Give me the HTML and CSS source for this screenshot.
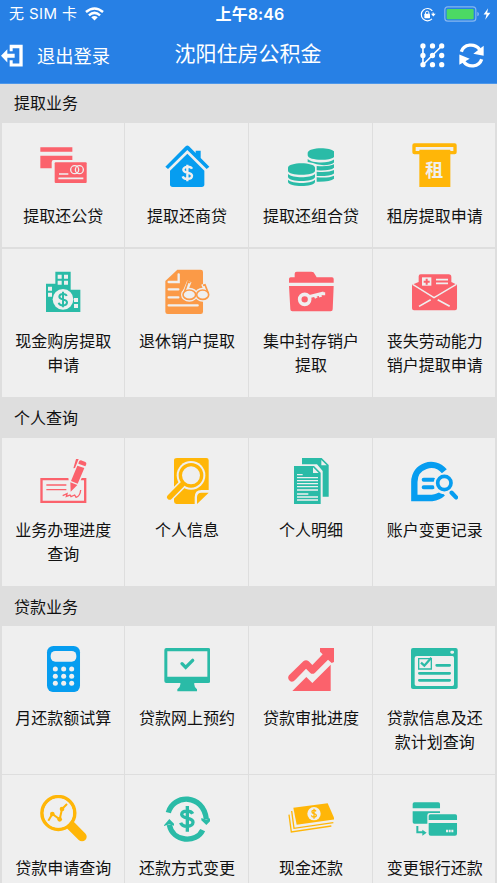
FILE: index.html
```html
<!DOCTYPE html>
<html lang="zh-CN">
<head>
<meta charset="utf-8">
<title>沈阳住房公积金</title>
<link rel="stylesheet" href="styles.css">
</head>
<body>
<header class="header">
  <div class="status">
    <div class="status-left">
      <span>无 SIM 卡</span>
      <svg class="wifi" viewBox="256 20 58 42"><g fill="none" stroke="#fff" stroke-width="7.5"><path d="M259 35Q285 13 311 35"/><path d="M268 45Q285 30 302 45"/></g><path d="M275 51Q285 43 295 51L285 61Z" fill="#fff"/></svg>
    </div>
    <div class="status-time">上午8:46</div>
    <div class="status-right">
      <svg class="lock" viewBox="519 19 48 44"><path d="M556 30A18.500 18.500 0 1 0 555 54M558 35L559 40" fill="none" stroke="#fff" stroke-width="3.500"/><path d="M552 39H566L559 47Z" fill="#fff"/><rect x="532" y="39" width="17" height="13" rx="2" fill="#fff"/><path d="M535.500 40V36A5 5 0 0 1 545.500 36V40" fill="none" stroke="#fff" stroke-width="3"/></svg>
      <svg class="battery" viewBox="589 17 108 48"><rect x="591.500" y="19.500" width="93" height="43" rx="9" fill="none" stroke="#86b6f0" stroke-width="3.500"/><rect x="597" y="26" width="81" height="31" rx="3" fill="#4cd964"/><path d="M689 34Q694 36 694 41T689 48Z" fill="#86b6f0"/></svg>
      <svg class="bolt" viewBox="707 23 23 37"><path d="M722 24L708 43H717L713 59L729 38H719Z" fill="#fff"/></svg>
    </div>
  </div>
  <nav class="nav">
    <a class="logout">
      <svg class="logout-icon" viewBox="4 134 66 68"><path d="M30 136H69V201H30V182H39V192H59V146H39V155H30Z" fill="#fff"/><path d="M4 169L23 149V163H45V175H23V189Z" fill="#fff"/></svg>
      <span>退出登录</span>
    </a>
    <h1 class="title">沈阳住房公积金</h1>
    <div class="tools">
      <svg class="pattern" viewBox="520 130 74 76"><path d="M528 139V196L585 139" fill="none" stroke="#fff" stroke-width="5"/><g fill="#fff"><circle cx="528" cy="139" r="8"/><circle cx="557" cy="139" r="8"/><circle cx="585" cy="139" r="8"/><circle cx="528" cy="168" r="8"/><circle cx="557" cy="168" r="8"/><circle cx="585" cy="168" r="8"/><circle cx="528" cy="196" r="8"/><circle cx="557" cy="196" r="8"/><circle cx="585" cy="196" r="8"/></g></svg>
      <svg class="refresh" viewBox="637 130 75 74"><g fill="none" stroke="#fff" stroke-width="10"><path d="M644 156C651 132 684 129 699 149"/><path d="M705 178C697 202 665 205 650 184"/></g><path d="M711 138V168L680 162ZM638 195V164L669 177Z" fill="#fff"/></svg>
    </div>
  </nav>
</header>

<main>
<section>
  <h2 class="heading heading-first">提取业务</h2>
  <div class="grid">
    <a class="cell">
      <svg class="icon red" viewBox="119 71 140 140"><path d="M120 84H216V97H120ZM120 109H216V122H160Q154 122 154 129V147H120Z"/><rect x="163" y="129" width="96" height="62" rx="3"/><g class="line" stroke-width="4"><circle cx="223" cy="151" r="12"/><circle cx="237" cy="151" r="12"/><path d="M176 164H204M174 177H249" stroke-width="5"/></g></svg>
      <span class="label">提取还公贷</span>
    </a>
    <a class="cell">
      <svg class="icon blue" viewBox="491 71 140 140"><path d="M495 142L556 81Q561 76 566 81L586 101V94H601V116L627 142L619 149L561 92L503 149Z"/><path d="M561 103L612 154V195Q612 203 604 203H517Q509 203 509 195V154Z"/><path class="line" d="M575 148C571 140 550 140 549 151C549 163 574 157 575 169C575 181 550 182 547 171M561 136V186" stroke-width="7"/></svg>
      <span class="label">提取还商贷</span>
    </a>
    <a class="cell">
      <svg class="icon teal" viewBox="121 71 140 140"><path d="M180 101C180 82 261 82 261 101V108C261 126 180 126 180 108ZM180 119C194 133 247 133 261 119V127C255 139 223 139 207 135Q198 130 180 128ZM207 140Q245 143 261 134V143Q253 155 207 153ZM207 157Q245 160 261 151V160Q253 171 207 170ZM207 174Q245 177 261 168V176Q253 188 207 187Z"/><path d="M121 145C121 127 202 127 202 145V154C202 170 121 170 121 154ZM121 164C135 177 188 177 202 164V173C199 189 124 189 121 173ZM121 181C135 194 188 194 202 181V188C199 204 124 204 121 188Z"/></svg>
      <span class="label">提取还组合贷</span>
    </a>
    <a class="cell">
      <svg class="icon yellow" viewBox="492 71 140 140"><path d="M502 72H623Q629 72 629 78V99Q629 105 623 105H610V203H517V105H502Q496 105 496 99V78Q496 72 502 72ZM506 83V95H517V91H610V95H619V83Z" fill-rule="evenodd"/><text class="badge" x="562" y="173">租</text></svg>
      <span class="label">租房提取申请</span>
    </a>
    <a class="cell">
      <svg class="icon teal" viewBox="119 72 140 140"><path d="M165 80H211V134H240V201H137V116H165Z"/><g class="hole"><path d="M172 89H184V101H172ZM191 89H203V101H191ZM172 107H184V119H172ZM191 107H203V119H191ZM143 125H155V137H143ZM143 143H155V155H143ZM221 159H233V171H221ZM221 177H233V189H221Z"/><circle cx="188" cy="163" r="31"/></g><path class="draw" d="M199 153C196 145 178 145 177 155C177 166 200 160 200 172C200 184 178 184 175 173M188 140V187" stroke-width="6"/></svg>
      <span class="label">现金购房提取申请</span>
    </a>
    <a class="cell">
      <svg class="icon orange" viewBox="491 72 140 140"><path d="M531 74H601Q608 74 608 81V200Q608 207 601 207H502Q495 207 495 200V108Z"/><path class="line" d="M535 88V111H505M505 133H534M505 157H534M505 181H592" stroke-width="7" stroke-linecap="round"/><path class="line" d="M552 145L567 109M622 145L609 116" stroke-width="14"/><g class="line" stroke-width="14"><ellipse cx="567" cy="149" rx="18" ry="14"/><ellipse cx="607" cy="149" rx="17" ry="14"/></g><g class="draw fillhole" stroke-width="5"><path d="M551 145L563 110L570 113M624 145L614 119L608 121"/><ellipse cx="567" cy="149" rx="19" ry="14"/><ellipse cx="607" cy="149" rx="18" ry="14"/></g></svg>
      <span class="label">退休销户提取</span>
    </a>
    <a class="cell">
      <svg class="icon red" viewBox="121 72 140 140"><path d="M124 113V102Q124 97 129 97H141V86Q141 80 147 80H191Q199 80 201 87L207 97H253Q258 97 258 102V113ZM124 123H258L255 193Q255 199 249 199H134Q128 199 128 193Z"/><circle class="line" cx="171" cy="163" r="15" stroke-width="11"/><path class="line" d="M183 155L228 144M202 151L206 159M216 148L219 156M228 142V151" stroke-width="9"/></svg>
      <span class="label">集中封存销户提取</span>
    </a>
    <a class="cell">
      <svg class="icon red" viewBox="492 72 140 140"><path d="M515 111V94Q515 88 521 88H605Q613 88 613 96V111L630 119V190Q630 196 624 196H501Q495 196 495 190V119Z"/><g class="line"><path d="M497 118L561 158L628 118" stroke-width="4"/><path d="M551 164L516 184M572 164L608 184M567 104H603M567 115H603" stroke-width="5"/></g><rect class="hole" x="525" y="97" width="28" height="25"/><path class="draw" d="M539 101V119M530 110H548" stroke-width="6"/></svg>
      <span class="label">丧失劳动能力销户提取申请</span>
    </a>
  </div>
</section>

<section>
  <h2 class="heading heading-tall">个人查询</h2>
  <div class="grid">
    <a class="cell">
      <svg class="icon red" viewBox="119 69 140 140"><path d="M204 129H120V204H258V129H244L241 136H251V197H127V136H205Z"/><path class="draw" d="M138 150H198M138 164H198M187 182L200 176L198 184L209 180L212 185L223 180L227 187Q239 184 241 165" stroke-width="4"/><path d="M231 92L252 99L232 146L212 138ZM234 86Q236 75 242 76L255 81Q261 84 255 94ZM210 142L231 150L211 170ZM227 72H235L224 99L219 100Z"/></svg>
      <span class="label">业务办理进度查询</span>
    </a>
    <a class="cell">
      <svg class="icon yellow" viewBox="491 69 140 140"><path d="M530 69H618Q625 69 625 76V165H603Q583 165 583 187V207H530Q521 207 521 199V76Q521 69 530 69ZM625 173L590 207V187Q590 173 603 173Z"/><path class="line" d="M550 144L505 189" stroke-width="25"/><circle class="hole" cx="572" cy="121" r="43"/><circle class="draw" cx="572" cy="121" r="32" stroke-width="10"/><path class="draw" d="M545 149L508 186" stroke-width="16" stroke-linecap="round"/></svg>
      <span class="label">个人信息</span>
    </a>
    <a class="cell">
      <svg class="icon teal" viewBox="121 69 140 140"><path d="M163 69H222L243 90V185H225V108L208 88H163ZM139 93H199L219 113V209H139Z"/><path class="hole" d="M221 75V91H237ZM196 97V114H213Z"/><path class="line" d="M148 119H165M148 128H211M148 137H211M148 146H211M148 155H211M148 165H211M148 177H182M148 186H211M148 195H211" stroke-width="4"/></svg>
      <span class="label">个人明细</span>
    </a>
    <a class="cell">
      <svg class="icon blue" viewBox="492 69 140 140"><path class="draw" d="M592 109C562 73 502 91 502 141V189H555Q575 187 587 175" stroke-width="19"/><path class="draw" d="M530 134H560M530 157H557" stroke-width="12" stroke-linecap="round"/><circle class="hole" cx="592" cy="145" r="32"/><circle class="draw" cx="592" cy="144" r="20" stroke-width="11"/><path class="draw" d="M614 173L627 187" stroke-width="13" stroke-linecap="round"/></svg>
      <span class="label">账户变更记录</span>
    </a>
  </div>
</section>

<section>
  <h2 class="heading">贷款业务</h2>
  <div class="grid">
    <a class="cell">
      <svg class="icon blue" viewBox="119 63 140 140"><rect x="140" y="63" width="99" height="138" rx="19"/><g class="hole"><rect x="151" y="78" width="77" height="32" rx="14"/><circle cx="165" cy="132" r="7.500"/><circle cx="190" cy="132" r="7.500"/><circle cx="214" cy="132" r="7.500"/><circle cx="165" cy="154" r="7.500"/><circle cx="190" cy="154" r="7.500"/><circle cx="214" cy="154" r="7.500"/><circle cx="165" cy="175" r="7.500"/><circle cx="190" cy="175" r="7.500"/><circle cx="214" cy="175" r="7.500"/></g></svg>
      <span class="label">月还款额试算</span>
    </a>
    <a class="cell">
      <svg class="icon teal" viewBox="491 63 140 140"><path d="M498 69H624Q630 69 630 75V168Q630 174 624 174H582Q580 185 590 193V199H531V193Q542 185 540 174H498Q492 174 492 168V75Q492 69 498 69ZM501 79V155H621V79Z" fill-rule="evenodd"/><path class="draw" d="M545 116L556 127L577 106" stroke-width="10" stroke-linecap="round"/></svg>
      <span class="label">贷款网上预约</span>
    </a>
    <a class="cell">
      <svg class="icon red" viewBox="121 63 140 140"><path d="M124 151L167 109Q175 102 183 109L194 120L225 88L217 80V69H257Q261 69 261 73V110L252 114L241 104L202 143Q194 150 187 143L175 131L143 164Q134 174 126 167Q118 159 124 151ZM134 198L176 156L194 174L249 119V198Z"/></svg>
      <span class="label">贷款审批进度</span>
    </a>
    <a class="cell">
      <svg class="icon teal" viewBox="492 63 140 140"><path d="M498 69H626Q632 69 632 75V187Q632 192 626 192H498Q492 192 492 187V75Q492 69 498 69ZM510 93Q503 93 503 99V178Q503 183 509 183H616Q621 183 621 178V99Q621 93 616 93Z" fill-rule="evenodd"/><rect class="hole" x="610" y="77" width="11" height="9" rx="4"/><g class="draw"><path d="M515 101H553V132H515Z" stroke-width="4"/><path d="M522 113L532 122L553 98" stroke-width="7"/><path d="M569 121H608M517 145H608M517 166H608" stroke-width="8" stroke-linecap="round"/></g></svg>
      <span class="label">贷款信息及还款计划查询</span>
    </a>
    <a class="cell">
      <svg class="icon yellow" viewBox="119 76 140 140"><circle class="draw" cx="174" cy="130" r="49" stroke-width="11"/><path class="draw" d="M211 167L245 201" stroke-width="28" stroke-linecap="round"/><circle class="hole" cx="174" cy="130" r="44"/><path class="draw" d="M144 153L156 133L178 149L185 118L200 103" stroke-width="6"/><circle cx="156" cy="133" r="7"/><circle cx="178" cy="149" r="7"/><circle cx="185" cy="118" r="7"/></svg>
      <span class="label">贷款申请查询</span>
    </a>
    <a class="cell">
      <svg class="icon teal" viewBox="491 76 140 140"><path class="draw" d="M504 129C518 73 609 71 618 149M507 165C517 217 588 222 607 181" stroke-width="16"/><path d="M603 145L617 150L632 145V152L618 166L603 152ZM491 167L507 148L521 162V168L507 164L491 169Z"/><path class="draw" d="M577 132C572 122 545 121 544 134C544 150 578 141 578 158C578 173 546 174 541 159M561 109V186" stroke-width="10"/></svg>
      <span class="label">还款方式变更</span>
    </a>
    <a class="cell">
      <svg class="icon yellow" viewBox="121 76 140 140"><path d="M137 114L240 101L261 149L147 165Z"/><circle class="hole" cx="199" cy="132" r="20"/><path class="draw" d="M205 125C202 120 192 121 193 127C193 134 206 130 206 137C206 144 193 144 191 137M199 117V147" stroke-width="4"/><path class="draw" d="M132 124L139 176L257 159M124 135L131 187L251 169" stroke-width="4"/></svg>
      <span class="label">现金还款</span>
    </a>
    <a class="cell">
      <svg class="icon teal" viewBox="492 76 140 140"><path d="M502 98H574Q579 98 579 103V116H497V103Q497 98 502 98ZM497 125H579V130H548Q541 130 541 137V162H502Q497 162 497 157ZM550 134H625Q630 134 630 139V151H545V139Q545 134 550 134ZM545 160H630V192Q630 198 624 198H551Q545 198 545 192ZM526 180L539 189L526 198Z"/><path class="draw" d="M511 169V188H530" stroke-width="6"/><path class="line" d="M597 184H620" stroke-width="7" stroke-dasharray="6 2"/></svg>
      <span class="label">变更银行还款</span>
    </a>
  </div>
</section>
</main>
</body>
</html>
```
FILE: styles.css
```css
* {
  box-sizing: border-box;
}

body {
  margin: 0;
  height: 883px;
  overflow: hidden;
  background: #dedede;
  color: #111;
  font-family: "Noto Sans CJK SC", sans-serif;
  font-size: 16px;
}

svg {
  display: block;
}

.header {
  height: 84px;
  background: #2780e5;
  border-bottom: 1px solid #4c97ea;
  color: #fff;
}

.status {
  display: grid;
  grid-template-columns: 1fr auto 1fr;
  align-items: center;
  height: 28px;
  padding: 0 6px 0 9px;
  line-height: 28px;
}

.status-left,
.status-right {
  display: flex;
  align-items: center;
}

.status-left {
  gap: 8px;
  font-family: Inter, "Noto Sans CJK SC", sans-serif;
  font-size: 15px;
  letter-spacing: 0.4px;
}

.status-time {
  font-family: Inter, "Noto Sans CJK SC", sans-serif;
  font-weight: 600;
  font-size: 16px;
  letter-spacing: 0.1px;
}

.status-right {
  justify-content: flex-end;
}

.wifi {
  width: 19px;
  height: 14px;
}

.lock {
  width: 16px;
  height: 15px;
  margin-right: 8px;
}

.battery {
  width: 36px;
  height: 16px;
  margin-right: 3px;
}

.bolt {
  width: 8px;
  height: 12px;
}

.nav {
  display: grid;
  grid-template-columns: 1fr auto 1fr;
  align-items: center;
  height: 50px;
  padding: 0 13px 0 1px;
}

.logout {
  display: flex;
  align-items: center;
  gap: 14px;
  padding-top: 4px;
  font-size: 18.3px;
  line-height: 24px;
}

.logout-icon {
  width: 22px;
  height: 23px;
}

.logout span {
  padding-bottom: 1px;
}

.title {
  margin: 0 0 0 11px;
  padding-bottom: 3px;
  font-size: 21px;
  font-weight: 400;
  line-height: 30px;
}

.tools {
  display: flex;
  justify-content: flex-end;
  gap: 14px;
  padding-top: 5px;
}

.pattern,
.refresh {
  width: 25px;
  height: 25px;
}

.heading {
  height: 40px;
  margin: 0;
  padding-left: 14px;
  font-size: 16px;
  font-weight: 400;
  line-height: 40px;
}

.heading-first {
  height: 39.4px;
  line-height: 37px;
}

.heading-tall {
  height: 41px;
  line-height: 41px;
}

.grid {
  display: grid;
  grid-template-columns: repeat(4, 1fr);
  gap: 1.4px;
  padding: 0 1.6px;
}

.cell {
  display: flex;
  flex-direction: column;
  align-items: center;
  padding: 20px 12px 20px 13px;
  background: #efefef;
}

.icon {
  width: 46.7px;
  height: 46.7px;
  margin-bottom: 13px;
  fill: currentColor;
}

.label {
  width: 96px;
  margin-bottom: 0.3px;
  color: #111;
  line-height: 24px;
  text-align: center;
}

.red { color: #fb626c; }
.blue { color: #069df0; }
.teal { color: #2abba7; }
.yellow { color: #ffb608; }
.orange { color: #fb9a47; }

.line {
  fill: none;
  stroke: #efefef;
}

.draw {
  fill: none;
  stroke: currentColor;
}

.hole,
.fillhole ellipse {
  fill: #efefef;
}

.fillhole path {
  fill: none;
}

.badge {
  fill: #efefef;
  font-size: 54px;
  font-weight: 700;
  text-anchor: middle;
}
```
